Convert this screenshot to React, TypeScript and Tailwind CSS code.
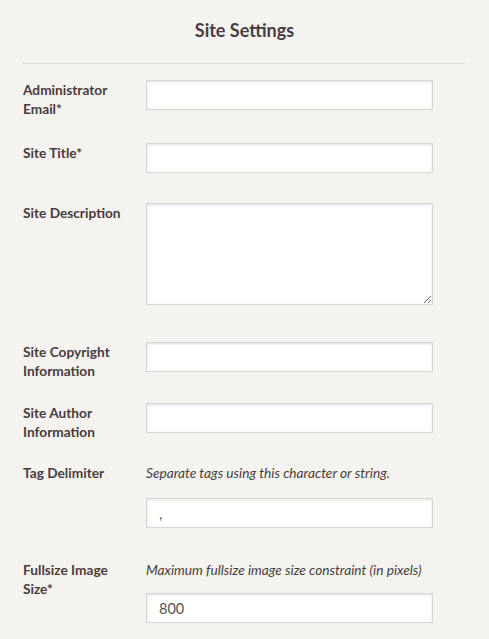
import React from "react";

const inputCls =
  "w-[287px] h-[30px] bg-white border border-[#d6d6d4] shadow-[inset_0_1px_3px_rgba(0,0,0,0.12)] px-3 text-[14.5px] text-[#555] outline-none";

const Label = ({ children }: { children: React.ReactNode }) => (
  <div className="w-[123px] shrink-0 pr-3 text-[13.7px] leading-[19px] font-bold text-[#4a3c3e]">
    {children}
  </div>
);

const Help = ({ children, mb }: { children: React.ReactNode; mb: string }) => (
  <p className={`italic text-[13.7px] leading-[19px] text-[#4a3c3e] ${mb}`}>{children}</p>
);

export default function App() {
  return (
    <div className="min-h-[639px] w-full bg-[#f4f3ef] px-[23px] font-['Lato',sans-serif]">
      {/* header */}
      <h2 className="pt-[18px] text-center text-[18px] leading-[24px] font-bold text-[#4a3c40]">
        Site Settings
      </h2>
      <div className="mt-[21px] border-t border-dotted border-[#cfcdc8]" />

      {/* fields */}
      <div className="flex items-start mt-[16px]">
        <Label>
          Administrator
          <br />
          Email*
        </Label>
        <input className={inputCls} />
      </div>

      <div className="flex items-start mt-[25px]">
        <Label>Site Title*</Label>
        <input className={inputCls} />
      </div>

      <div className="flex items-start mt-[30px]">
        <Label>Site Description</Label>
        <textarea className="w-[287px] h-[102px] bg-white border border-[#d6d6d4] shadow-[inset_0_1px_3px_rgba(0,0,0,0.12)] px-3 py-2 text-[14px] text-[#555] outline-none" />
      </div>

      <div className="flex items-start mt-[37px]">
        <Label>
          Site Copyright
          <br />
          Information
        </Label>
        <input className={inputCls} />
      </div>

      <div className="flex items-start mt-[23px]">
        <Label>
          Site Author
          <br />
          Information
        </Label>
        <input className={inputCls} />
      </div>

      <div className="flex items-start mt-[22px]">
        <Label>Tag Delimiter</Label>
        <div>
          <Help mb="mb-[16px]">Separate tags using this character or string.</Help>
          <input className={inputCls} defaultValue="," />
        </div>
      </div>

      <div className="flex items-start mt-[32px]">
        <Label>
          Fullsize Image
          <br />
          Size*
        </Label>
        <div>
          <Help mb="mb-[14px]">Maximum fullsize image size constraint (in pixels)</Help>
          <input className={inputCls} defaultValue="800" />
        </div>
      </div>
    </div>
  );
}
